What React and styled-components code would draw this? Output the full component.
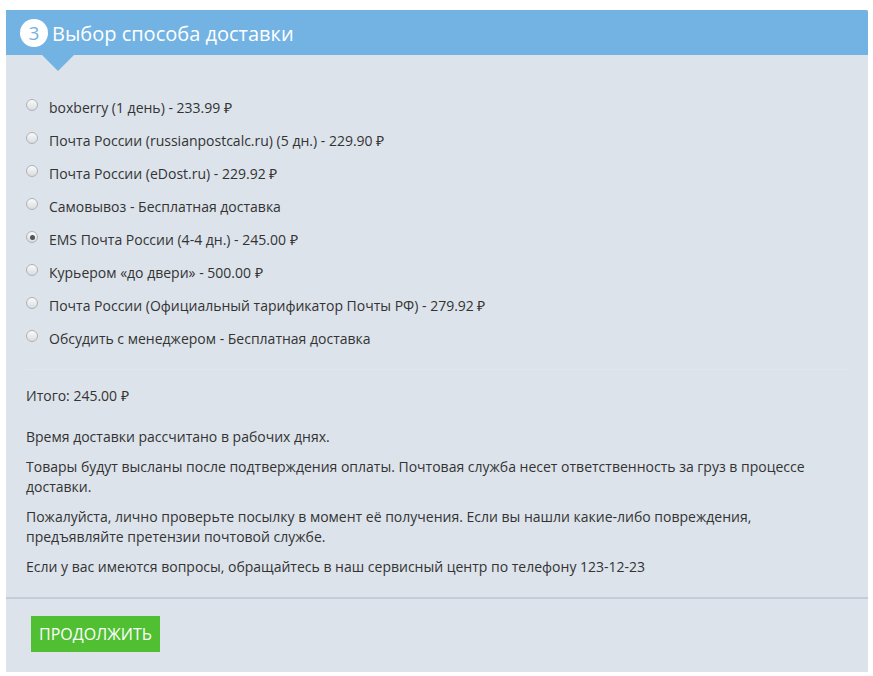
import styled, { createGlobalStyle } from "styled-components";

const GlobalStyle = createGlobalStyle`
  body {
    margin: 0;
    background: #ffffff;
    font-family: "Open Sans", "Liberation Sans", sans-serif;
  }
`;

const options = [
  "boxberry (1 день) - 233.99 ₽",
  "Почта России (russianpostcalc.ru) (5 дн.) - 229.90 ₽",
  "Почта России (eDost.ru) - 229.92 ₽",
  "Самовывоз - Бесплатная доставка",
  "EMS Почта России (4-4 дн.) - 245.00 ₽",
  "Курьером «до двери» - 500.00 ₽",
  "Почта России (Официальный тарификатор Почты РФ) - 279.92 ₽",
  "Обсудить с менеджером - Бесплатная доставка",
];

export default function App() {
  return (
    <>
      <GlobalStyle />
      <Page>
        <Panel>
          <Header>
            <StepNumber>3</StepNumber>
            <Title>Выбор способа доставки</Title>
          </Header>
          <Body>
            <OptionList>
              {options.map((o, i) => (
                <Option key={o}>
                  <Radio type="radio" name="delivery" defaultChecked={i === 4} />
                  <span>{o}</span>
                </Option>
              ))}
            </OptionList>
            <Divider />
            <Text>Итого: 245.00 ₽</Text>
            <Notes>
              <Text>Время доставки рассчитано в рабочих днях.</Text>
              <Text>
                Товары будут высланы после подтверждения оплаты. Почтовая служба несет ответственность за груз в процессе
                доставки.
              </Text>
              <Text>
                Пожалуйста, лично проверьте посылку в момент её получения. Если вы нашли какие-либо повреждения,
                предъявляйте претензии почтовой службе.
              </Text>
              <Text>Если у вас имеются вопросы, обращайтесь в наш сервисный центр по телефону 123-12-23</Text>
            </Notes>
          </Body>
          <Footer>
            <Button>Продолжить</Button>
          </Footer>
        </Panel>
      </Page>
    </>
  );
}

const Page = styled.div`
  padding: 10px 5px 6px 6px;
`;

const Panel = styled.div`
  width: 862px;
  background: #dce3eb;
  color: #333333;
  font-size: 14px;
`;

const Header = styled.div`
  position: relative;
  height: 45px;
  background: #73b3e3;
  border-radius: 0 2px 0 0;
  display: flex;
  align-items: center;
  padding: 1px 0 0 14px;
  box-sizing: border-box;
  gap: 4px;

  &::after {
    content: "";
    position: absolute;
    left: 36px;
    top: 45px;
    border-left: 16px solid transparent;
    border-right: 16px solid transparent;
    border-top: 16px solid #73b3e3;
  }
`;

const StepNumber = styled.span`
  width: 28px;
  height: 28px;
  border-radius: 50%;
  background: #ffffff;
  color: #73b3e3;
  font-size: 19px;
  display: flex;
  align-items: center;
  justify-content: center;
  line-height: 1;
`;

const Title = styled.h2`
  margin: 0;
  color: #ffffff;
  font-size: 20px;
  font-weight: 400;
`;

const Body = styled.div`
  padding: 43px 20px 0 20px;
`;

const OptionList = styled.div`
  display: flex;
  flex-direction: column;
  gap: 13px;
  padding-bottom: 20px;
`;

const Option = styled.label`
  display: flex;
  align-items: center;
  gap: 11px;
  height: 20px;
  line-height: 20px;
`;

const Radio = styled.input`
  appearance: none;
  margin: 0;
  width: 12px;
  height: 12px;
  border-radius: 50%;
  border: 1px solid #adb2b8;
  background: linear-gradient(#fafafa, #dadcdf);
  position: relative;
  top: -3px;
  flex-shrink: 0;

  &:checked::after {
    content: "";
    position: absolute;
    left: 2.5px;
    top: 2.5px;
    width: 5px;
    height: 5px;
    border-radius: 50%;
    background: #50555b;
  }
`;

const Divider = styled.hr`
  border: 0;
  border-top: 1px solid #e4e6e9;
  margin: 0 0 16px 0;
`;

const Text = styled.p`
  margin: 0;
  line-height: 20px;
`;

const Notes = styled.div`
  display: flex;
  flex-direction: column;
  gap: 10px;
  padding: 21px 0 20px 0;
`;

const Footer = styled.div`
  border-top: 2px solid #c3ccd8;
  padding: 17px 25px 20px 25px;
`;

const Button = styled.button`
  background: #50bf32;
  border: 0;
  color: #ffffff;
  font-family: "Open Sans", "Liberation Sans", sans-serif;
  font-size: 16px;
  text-transform: uppercase;
  height: 36px;
  padding: 0 8px;
  cursor: pointer;
`;
